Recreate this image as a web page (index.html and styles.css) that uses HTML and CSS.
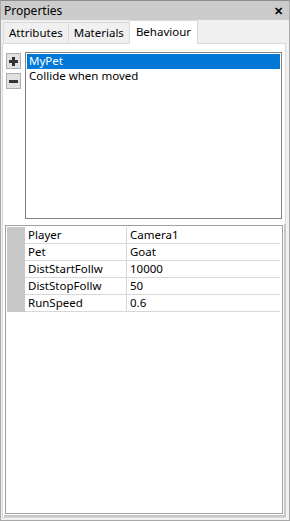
FILE: index.html
```html
<!DOCTYPE html>
<html>
<head>
    <title>Properties</title>
    <link rel="stylesheet" href="styles.css">
</head>
<body>
    <div class="window">
        <div class="titlebar">
            <span class="title">Properties</span>
            <span class="close">&#x2715;</span>
        </div>
        <div class="tabs">
            <div class="tab">Attributes</div>
            <div class="tab">Materials</div>
            <div class="tab active">Behaviour</div>
        </div>
        <div class="panel">
            <div class="behaviours">
                <div class="tools">
                    <button class="tool">
                        <svg width="9" height="9" viewBox="0 0 9 9"><path d="M3 0h3v3h3v3H6v3H3V6H0V3h3z" fill="#333"/></svg>
                    </button>
                    <button class="tool">
                        <svg width="9" height="9" viewBox="0 0 9 9"><path d="M0 3h9v3H0z" fill="#333"/></svg>
                    </button>
                </div>
                <div class="list">
                    <div class="item selected">MyPet</div>
                    <div class="item">Collide when moved</div>
                </div>
            </div>
            <div class="grid">
                <div class="row"><div class="margin"></div><div class="name">Player</div><div class="value">Camera1</div></div>
                <div class="row"><div class="margin"></div><div class="name">Pet</div><div class="value">Goat</div></div>
                <div class="row"><div class="margin"></div><div class="name">DistStartFollw</div><div class="value">10000</div></div>
                <div class="row"><div class="margin"></div><div class="name">DistStopFollw</div><div class="value">50</div></div>
                <div class="row"><div class="margin"></div><div class="name">RunSpeed</div><div class="value">0.6</div></div>
            </div>
        </div>
    </div>
</body>
</html>
```

FILE: styles.css
```css
html, body {
    margin: 0;
    height: 100%;
}

body {
    background-color: #f0f0f0;
    font-family: "Noto Sans", "Open Sans", sans-serif;
    font-size: 11.5px;
    color: #000;
}

.window {
    box-sizing: border-box;
    height: 521px;
    border: 1px solid #a9a9a9;
    border-top-color: #8c8c8c;
    display: flex;
    flex-direction: column;
}

.titlebar {
    height: 19px;
    background-color: #cccccc;
    display: flex;
    align-items: center;
    justify-content: space-between;
    padding: 0 6px 0 3px;
}

.title {
    font-size: 12px;
}

.close {
    font-size: 11px;
    font-weight: bold;
}

.tabs {
    display: flex;
    align-items: flex-end;
    height: 23px;
    padding-left: 2px;
}

.tab {
    box-sizing: border-box;
    height: 21px;
    padding: 0 5px;
    line-height: 19px;
    border: 1px solid #d9d9d9;
    border-bottom: none;
    background-color: #f0f0f0;
    margin-right: -1px;
}

.tab.active {
    padding: 0 6px;
    background-color: #fff;
    line-height: 21px;
    position: relative;
    z-index: 1;
    margin-bottom: -1px;
    height: 24px;
}

.panel {
    flex: 1;
    margin: 0 3px 2px 1px;
    background-color: #fff;
    border: 1px solid #d9d9d9;
    display: flex;
    flex-direction: column;
    padding: 8px 2px 3px 2px;
}

.behaviours {
    display: flex;
    height: 167px;
    padding-left: 1px;
}

.tools {
    display: flex;
    flex-direction: column;
    gap: 4px;
    width: 19px;
    padding-top: 1px;
}

.tool {
    box-sizing: border-box;
    width: 15px;
    height: 16px;
    padding: 0;
    border: 1px solid #adadad;
    background-color: #e1e1e1;
    display: flex;
    align-items: center;
    justify-content: center;
}

.list {
    flex: 1;
    border: 1px solid #828282;
    margin-right: 1px;
    padding: 1px;
}

.item {
    height: 15px;
    line-height: 14px;
    padding-left: 2px;
}

.item.selected {
    background-color: #0078d7;
    color: #fff;
}

.grid {
    flex: 1;
    margin-top: 6px;
    border: 1px solid #a0a0a0;
    padding: 1px;
    box-shadow: 0 0 0 1px #fff, 1px 1px 0 2px #c8c8c8;
}

.row {
    display: flex;
    height: 17px;
    line-height: 16px;
}

.margin {
    width: 18px;
    background-color: #c8c8c8;
}

.name {
    width: 98px;
    padding-left: 3px;
    border-right: 1px solid #d8d8d8;
    border-bottom: 1px solid #d8d8d8;
}

.value {
    flex: 1;
    padding-left: 3px;
    border-bottom: 1px solid #d8d8d8;
    margin-right: 1px;
}
```
